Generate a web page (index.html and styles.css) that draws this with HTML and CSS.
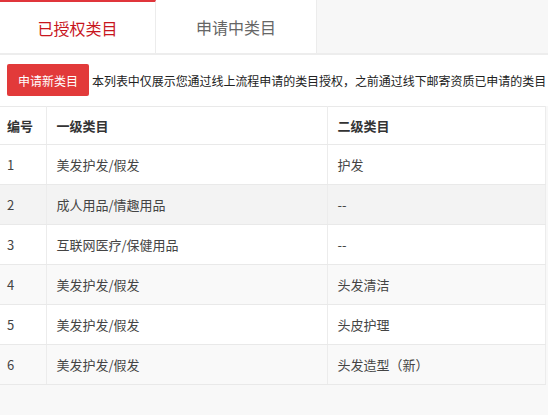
FILE: index.html
```html
<!DOCTYPE html>
<html lang="zh-CN">
<head>
<meta charset="utf-8">
<title>类目管理</title>
<link rel="stylesheet" href="styles.css">
</head>
<body>
<div class="tabs">
  <div class="tab tab-active">已授权类目</div>
  <div class="tab tab-second">申请中类目</div>
</div>
<div class="toolbar">
  <button class="btn-apply" type="button">申请新类目</button>
  <span class="note">本列表中仅展示您通过线上流程申请的类目授权，之前通过线下邮寄资质已申请的类目</span>
</div>
<table class="cat-table">
  <thead>
    <tr><th class="c-no">编号</th><th class="c-first">一级类目</th><th class="c-second">二级类目</th></tr>
  </thead>
  <tbody>
    <tr><td class="c-no">1</td><td>美发护发/假发</td><td>护发</td></tr>
    <tr class="row-hover"><td class="c-no">2</td><td>成人用品/情趣用品</td><td>--</td></tr>
    <tr><td class="c-no">3</td><td>互联网医疗/保健用品</td><td>--</td></tr>
    <tr class="row-alt"><td class="c-no">4</td><td>美发护发/假发</td><td>头发清洁</td></tr>
    <tr><td class="c-no">5</td><td>美发护发/假发</td><td>头皮护理</td></tr>
    <tr class="row-alt"><td class="c-no">6</td><td>美发护发/假发</td><td>头发造型（新）</td></tr>
  </tbody>
</table>
</body>
</html>
```
FILE: styles.css
```css
html, body {
  margin: 0;
  padding: 0;
}
body {
  background: #f8f8f8;
  font-family: "Noto Sans CJK SC", "Noto Sans", sans-serif;
  color: #333;
  width: 548px;
  height: 415px;
  overflow: hidden;
}
.tabs {
  display: flex;
  height: 53px;
  background: #f7f7f7;
  border-bottom: 2px solid #ededed;
}
.tab {
  display: flex;
  align-items: center;
  justify-content: center;
  background: #fff;
  border-right: 1px solid #ececec;
  font-size: 16px;
  color: #666;
  box-sizing: border-box;
}
.tab-active {
  width: 156px;
  color: #c8161e;
  border-top: 2px solid #e0353b;
}
.tab-second {
  width: 161px;
}
.toolbar {
  display: flex;
  align-items: center;
  background: #fff;
  padding: 9px 0 10px 7px;
  white-space: nowrap;
}
.btn-apply {
  flex: none;
  width: 82px;
  height: 32px;
  border: 0;
  border-radius: 2px;
  background: #e23a3a;
  color: #fff;
  font-family: inherit;
  font-size: 12px;
  padding: 0;
  margin-right: 3px;
}
.note {
  font-size: 12px;
  letter-spacing: -0.05px;
  color: #222;
}
.cat-table {
  width: 546px;
  border-collapse: collapse;
  background: #fff;
  font-size: 13px;
  table-layout: fixed;
}
.cat-table th,
.cat-table td {
  border-top: 1px solid #e9e9e9;
  border-bottom: 1px solid #e9e9e9;
  border-right: 1px solid #ececec;
  text-align: left;
  padding: 0 10px;
  white-space: nowrap;
}
.cat-table th {
  height: 37px;
  font-weight: bold;
  color: #333;
}
.cat-table td {
  height: 39px;
  color: #444;
}
.cat-table .c-no {
  width: 46px;
  padding-left: 7px;
  padding-right: 0;
  box-sizing: border-box;
}
.cat-table .c-first {
  width: 281px;
  box-sizing: border-box;
}
.row-hover td {
  background: #f3f3f3;
}
.row-alt td {
  background: #f9f9f9;
}
```
